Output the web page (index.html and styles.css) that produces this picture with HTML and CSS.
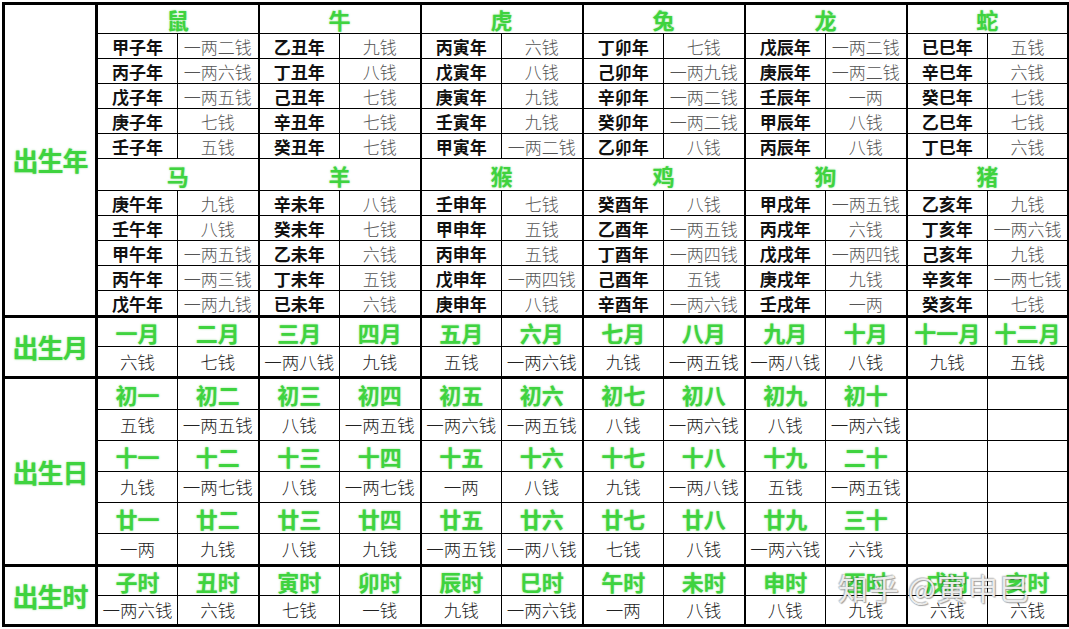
FILE: index.html
```html
<!DOCTYPE html>
<html lang="zh">
<head>
<meta charset="utf-8">
<title>称骨表</title>
<link rel="stylesheet" href="styles.css">
</head>
<body>
<div class="wrap">
<table class="bone">
<colgroup>
<col class="lab">
<col><col>
<col class="pair"><col>
<col class="pair"><col>
<col class="pair"><col>
<col class="pair"><col>
<col class="pair"><col>
</colgroup>
<tbody class="sec">
<tr class="zh">
<td class="label" rowspan="12">出生年</td>
<td colspan="2">鼠</td><td colspan="2">牛</td><td colspan="2">虎</td><td colspan="2">兔</td><td colspan="2">龙</td><td colspan="2">蛇</td>
</tr>
<tr class="yr"><td class="n">甲子年</td><td class="v">一两二钱</td><td class="n">乙丑年</td><td class="v">九钱</td><td class="n">丙寅年</td><td class="v">六钱</td><td class="n">丁卯年</td><td class="v">七钱</td><td class="n">戊辰年</td><td class="v">一两二钱</td><td class="n">已巳年</td><td class="v">五钱</td></tr>
<tr class="yr"><td class="n">丙子年</td><td class="v">一两六钱</td><td class="n">丁丑年</td><td class="v">八钱</td><td class="n">戊寅年</td><td class="v">八钱</td><td class="n">己卯年</td><td class="v">一两九钱</td><td class="n">庚辰年</td><td class="v">一两二钱</td><td class="n">辛巳年</td><td class="v">六钱</td></tr>
<tr class="yr"><td class="n">戊子年</td><td class="v">一两五钱</td><td class="n">己丑年</td><td class="v">七钱</td><td class="n">庚寅年</td><td class="v">九钱</td><td class="n">辛卯年</td><td class="v">一两二钱</td><td class="n">壬辰年</td><td class="v">一两</td><td class="n">癸巳年</td><td class="v">七钱</td></tr>
<tr class="yr"><td class="n">庚子年</td><td class="v">七钱</td><td class="n">辛丑年</td><td class="v">七钱</td><td class="n">壬寅年</td><td class="v">九钱</td><td class="n">癸卯年</td><td class="v">一两二钱</td><td class="n">甲辰年</td><td class="v">八钱</td><td class="n">乙巳年</td><td class="v">七钱</td></tr>
<tr class="yr"><td class="n">壬子年</td><td class="v">五钱</td><td class="n">癸丑年</td><td class="v">七钱</td><td class="n">甲寅年</td><td class="v">一两二钱</td><td class="n">乙卯年</td><td class="v">八钱</td><td class="n">丙辰年</td><td class="v">八钱</td><td class="n">丁巳年</td><td class="v">六钱</td></tr>
<tr class="zh zh2">
<td colspan="2">马</td><td colspan="2">羊</td><td colspan="2">猴</td><td colspan="2">鸡</td><td colspan="2">狗</td><td colspan="2">猪</td>
</tr>
<tr class="yr"><td class="n">庚午年</td><td class="v">九钱</td><td class="n">辛未年</td><td class="v">八钱</td><td class="n">壬申年</td><td class="v">七钱</td><td class="n">癸酉年</td><td class="v">八钱</td><td class="n">甲戌年</td><td class="v">一两五钱</td><td class="n">乙亥年</td><td class="v">九钱</td></tr>
<tr class="yr"><td class="n">壬午年</td><td class="v">八钱</td><td class="n">癸未年</td><td class="v">七钱</td><td class="n">甲申年</td><td class="v">五钱</td><td class="n">乙酉年</td><td class="v">一两五钱</td><td class="n">丙戌年</td><td class="v">六钱</td><td class="n">丁亥年</td><td class="v">一两六钱</td></tr>
<tr class="yr"><td class="n">甲午年</td><td class="v">一两五钱</td><td class="n">乙未年</td><td class="v">六钱</td><td class="n">丙申年</td><td class="v">五钱</td><td class="n">丁酉年</td><td class="v">一两四钱</td><td class="n">戊戌年</td><td class="v">一两四钱</td><td class="n">己亥年</td><td class="v">九钱</td></tr>
<tr class="yr"><td class="n">丙午年</td><td class="v">一两三钱</td><td class="n">丁未年</td><td class="v">五钱</td><td class="n">戊申年</td><td class="v">一两四钱</td><td class="n">己酉年</td><td class="v">五钱</td><td class="n">庚戌年</td><td class="v">九钱</td><td class="n">辛亥年</td><td class="v">一两七钱</td></tr>
<tr class="yr"><td class="n">戊午年</td><td class="v">一两九钱</td><td class="n">已未年</td><td class="v">六钱</td><td class="n">庚申年</td><td class="v">八钱</td><td class="n">辛酉年</td><td class="v">一两六钱</td><td class="n">壬戌年</td><td class="v">一两</td><td class="n">癸亥年</td><td class="v">七钱</td></tr>
</tbody>
<tbody class="sec">
<tr class="hd mo">
<td class="label" rowspan="2">出生月</td>
<td>一月</td><td>二月</td><td>三月</td><td>四月</td><td>五月</td><td>六月</td><td>七月</td><td>八月</td><td>九月</td><td>十月</td><td>十一月</td><td>十二月</td>
</tr>
<tr class="val mo"><td>六钱</td><td>七钱</td><td>一两八钱</td><td>九钱</td><td>五钱</td><td>一两六钱</td><td>九钱</td><td>一两五钱</td><td>一两八钱</td><td>八钱</td><td>九钱</td><td>五钱</td></tr>
</tbody>
<tbody class="sec day">
<tr class="hd">
<td class="label" rowspan="6">出生日</td>
<td>初一</td><td>初二</td><td>初三</td><td>初四</td><td>初五</td><td>初六</td><td>初七</td><td>初八</td><td>初九</td><td>初十</td><td></td><td></td>
</tr>
<tr class="val"><td>五钱</td><td>一两五钱</td><td>八钱</td><td>一两五钱</td><td>一两六钱</td><td>一两五钱</td><td>八钱</td><td>一两六钱</td><td>八钱</td><td>一两六钱</td><td></td><td></td></tr>
<tr class="hd"><td>十一</td><td>十二</td><td>十三</td><td>十四</td><td>十五</td><td>十六</td><td>十七</td><td>十八</td><td>十九</td><td>二十</td><td></td><td></td></tr>
<tr class="val"><td>九钱</td><td>一两七钱</td><td>八钱</td><td>一两七钱</td><td>一两</td><td>八钱</td><td>九钱</td><td>一两八钱</td><td>五钱</td><td>一两五钱</td><td></td><td></td></tr>
<tr class="hd"><td>廿一</td><td>廿二</td><td>廿三</td><td>廿四</td><td>廿五</td><td>廿六</td><td>廿七</td><td>廿八</td><td>廿九</td><td>三十</td><td></td><td></td></tr>
<tr class="val"><td>一两</td><td>九钱</td><td>八钱</td><td>九钱</td><td>一两五钱</td><td>一两八钱</td><td>七钱</td><td>八钱</td><td>一两六钱</td><td>六钱</td><td></td><td></td></tr>
</tbody>
<tbody class="sec hour">
<tr class="hd">
<td class="label" rowspan="2">出生时</td>
<td>子时</td><td>丑时</td><td>寅时</td><td>卯时</td><td>辰时</td><td>巳时</td><td>午时</td><td>未时</td><td>申时</td><td>酉时</td><td>戌时</td><td>亥时</td>
</tr>
<tr class="val"><td>一两六钱</td><td>六钱</td><td>七钱</td><td>一钱</td><td>九钱</td><td>一两六钱</td><td>一两</td><td>八钱</td><td>八钱</td><td>九钱</td><td>六钱</td><td>六钱</td></tr>
</tbody>
</table>
<div class="watermark">知乎 @寅申巳</div>
</div>
</body>
</html>
```
FILE: styles.css
```css
html, body {
  margin: 0;
  padding: 0;
  background: #fff;
}
body {
  font-family: "Noto Sans CJK SC", "Noto Sans", sans-serif;
}
.wrap {
  position: relative;
  width: 1069px;
  height: 629px;
  padding: 2px 0 0 2px;
  box-sizing: border-box;
  overflow: hidden;
}
.bone {
  border-collapse: collapse;
  table-layout: fixed;
  width: 1065px;
  border: 3px solid #000;
}
.bone col { width: 81px; }
.bone col.lab { width: 93px; border-right: 3px solid #000; }
.bone col.pair { border-left: 2px solid #000; }
.bone tbody.sec { border-top: 3px solid #000; }
.bone td {
  border: 1px solid #000;
  padding: 0;
  text-align: center;
  vertical-align: middle;
  white-space: nowrap;
  overflow: hidden;
  line-height: 1;
}
.bone td.label {
  font-size: 26px;
  font-weight: 700;
  color: #3fd33f;
  text-shadow: 0 0 2px rgba(60, 200, 60, 0.6);
  border-right: 3px solid #000;
  letter-spacing: -1px;
}
.zh td {
  height: 28px;
  font-size: 22px;
  font-weight: 700;
  color: #3fd33f;
  text-shadow: 0 0 2px rgba(60, 200, 60, 0.6);
}
.zh2 td { height: 31px; }
.yr td { height: 24px; font-size: 17px; }
.yr td.n { font-weight: 700; color: #111; }
.yr td.v { font-weight: 300; color: #555; }
.hd td {
  height: 29px;
  font-size: 22px;
  font-weight: 700;
  color: #3fd33f;
  text-shadow: 0 0 2px rgba(60, 200, 60, 0.6);
}
.hd.mo td { height: 28px; }
.val td {
  height: 29px;
  font-size: 17.5px;
  font-weight: 300;
  color: #222;
}
.val.mo td { height: 29px; }
.day .hd td, .day .val td { height: 30px; }
.hour .hd td, .hour .val td { height: 28px; }
.watermark {
  position: absolute;
  left: 838px;
  top: 565px;
  font-size: 30px;
  font-weight: 400;
  color: rgba(255, 255, 255, 0.85);
  letter-spacing: 1px;
  text-shadow: 0 0 1px #888, 1px 1px 1px rgba(0, 0, 0, 0.35), -1px -1px 1px rgba(0, 0, 0, 0.2);
  white-space: nowrap;
  pointer-events: none;
}
```
